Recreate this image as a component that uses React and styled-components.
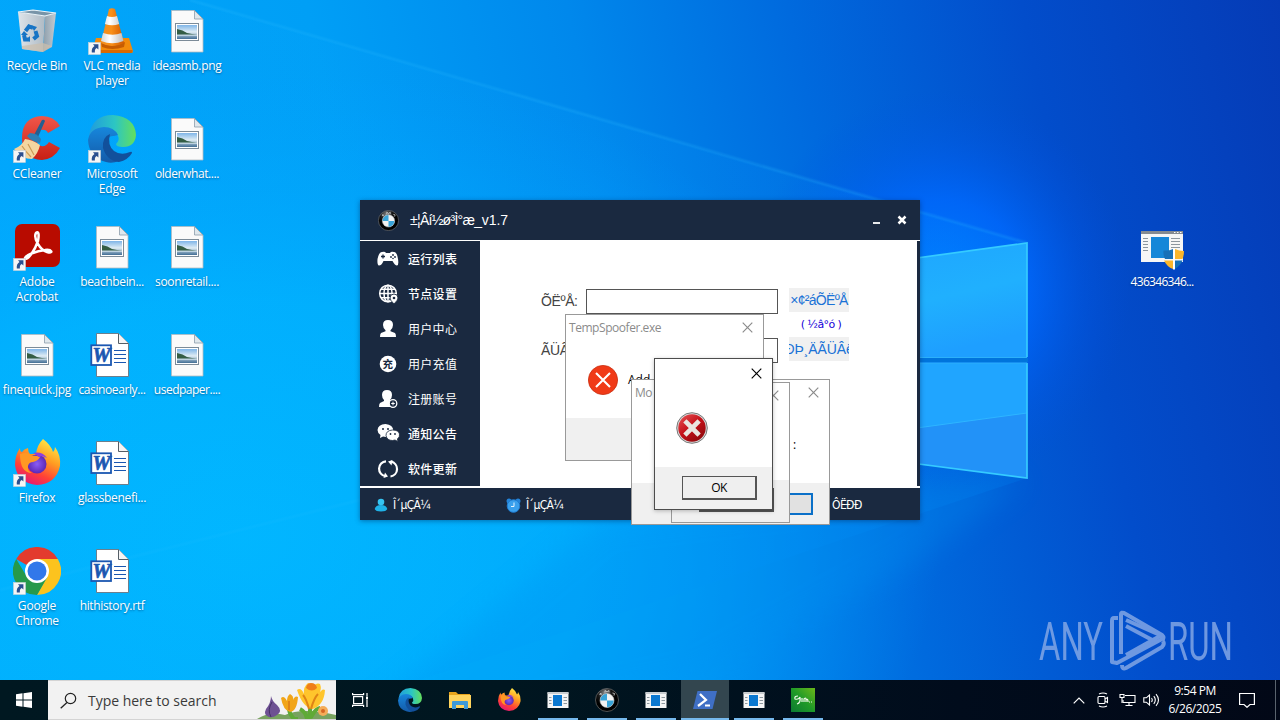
import React from "react";
import styled, { createGlobalStyle } from "styled-components";

const Global = createGlobalStyle`
  * { box-sizing: border-box; }
  html, body { margin: 0; padding: 0; }
  body { width: 1280px; height: 720px; overflow: hidden; }
  svg { display: block; flex: none; }
`;

const ui = `"Open Sans", "Noto Sans", "Noto Sans CJK SC", sans-serif`;
const navy = "#1a2940";

const Screen = styled.div`
  position: relative;
  width: 1280px;
  height: 720px;
  overflow: hidden;
  display: flex;
  flex-direction: column;
  font-family: ${ui};
  background: #0478e4;
`;
const Wallpaper = styled.div`
  position: absolute;
  inset: 0;
`;
const Desktop = styled.main`
  position: relative;
  flex: 1;
`;
const IconColumns = styled.div`
  display: grid;
  grid-template-columns: repeat(3, 75px);
  grid-auto-rows: 108px;
`;
const Shortcut = styled.div`
  display: flex;
  flex-direction: column;
  align-items: center;
  width: 74px;
  padding-top: 7px;
`;
const IconSlot = styled.div`
  position: relative;
  width: 48px;
  height: 48px;
`;
const Label = styled.div`
  margin-top: 3px;
  font-size: 12px;
  line-height: 15px;
  letter-spacing: ${(p) => p.$ls ?? -0.2}px;
  color: #fff;
  text-align: center;
  white-space: pre;
  text-shadow: 0 1px 2px rgba(0, 40, 90, 0.55);
`;
const ArrowBadge = styled.div`
  position: absolute;
  left: 0;
  bottom: 0;
`;
const Loose = styled.div`
  position: absolute;
  left: 1125px;
  top: 216px;
`;

/* ---------- application window ---------- */
const AppWindow = styled.section`
  position: absolute;
  left: 360px;
  top: 200px;
  width: 560px;
  height: 320px;
  display: flex;
  flex-direction: column;
  background: #fff;
  box-shadow: 0 1px 5px rgba(0, 30, 80, 0.45);
`;
const TitleBar = styled.header`
  display: flex;
  align-items: center;
  height: 40px;
  padding: 0 13px 0 18px;
  background: ${navy};
  color: #fff;
  margin-bottom: 1px;
`;
const AppTitle = styled.div`
  flex: 1;
  margin-left: 11px;
  margin-top: -1px;
  font: 14px/20px "Liberation Sans", sans-serif;
  letter-spacing: -0.72px;
`;
const VersionText = styled.span`
  letter-spacing: -0.1px;
`;
const Caption = styled.div`
  display: flex;
  align-items: center;
  gap: 15px;
`;
const AppBody = styled.div`
  display: flex;
  height: 245px;
  border-right: 3px solid ${navy};
  margin-bottom: 2px;
`;
const Sidebar = styled.nav`
  width: 120px;
  background: ${navy};
`;
const MenuItem = styled.div`
  display: flex;
  align-items: center;
  height: 35px;
  padding-left: 16px;
  gap: 8px;
  color: #fff;
  font: ${(p) => (p.$bold ? 500 : 400)} 12px/18px "Noto Sans CJK SC", sans-serif;
  letter-spacing: 0.3px;
`;
const Form = styled.div`
  flex: 1;
  display: grid;
  grid-template-columns: 45px 192px 60px;
  grid-template-rows: 25px 24px 25px;
  column-gap: 0;
  padding: 48px 0 0 61px;
`;
const FieldLabel = styled.label`
  font: 14px/24px "Liberation Sans", sans-serif;
  letter-spacing: -0.4px;
  color: #444;
  white-space: nowrap;
`;
const Field = styled.div`
  height: 25px;
  border: 1px solid #555;
  background: #fff;
`;
const LinkBox = styled.div`
  display: flex;
  justify-content: center;
  height: 24px;
  margin-left: 11px;
  width: 60px;
  margin-top: ${(p) => p.$up ?? 0}px;
  background: #f0f0f0;
  color: #1a72d6;
  font: 14px/25px "Liberation Sans", sans-serif;
  letter-spacing: ${(p) => p.$ls ?? 0}px;
  white-space: nowrap;
  overflow: hidden;
`;
const Unbind = styled.div`
  grid-column: 3;
  width: 60px;
  margin-left: 13px;
  color: #1400d8;
  font: 11px/21px "DejaVu Sans", sans-serif;
  text-align: center;
  letter-spacing: -0.6px;
  white-space: pre;
`;
const StatusBar = styled.footer`
  display: flex;
  align-items: center;
  height: 32px;
  padding: 2px 0 0 14px;
  background: ${navy};
  color: #fff;
  font: 12px/16px "DejaVu Sans Condensed", "DejaVu Sans", sans-serif;
  font-stretch: condensed;
`;
const Status = styled.div`
  display: flex;
  align-items: center;
  gap: 5px;
  width: ${(p) => p.$w}px;
  letter-spacing: -0.6px;
`;

/* ---------- message boxes ---------- */
const Dialog = styled.section`
  position: absolute;
  left: ${(p) => p.$x}px;
  top: ${(p) => p.$y}px;
  width: ${(p) => p.$w}px;
  height: ${(p) => p.$h}px;
  display: flex;
  flex-direction: column;
  background: #fff;
  border: 1px solid ${(p) => (p.$active ? "#4c4c4c" : "#999")};
  box-shadow: ${(p) => (p.$active ? "0 1px 4px rgba(0,0,0,.25)" : "none")};
  overflow: hidden;
`;
const DialogTitle = styled.div`
  display: flex;
  align-items: center;
  justify-content: space-between;
  height: ${(p) => p.$h ?? 24}px;
  padding: 0 10px 0 3px;
  font-size: 12px;
  letter-spacing: -0.45px;
  color: #8b8b8b;
`;
const DialogBody = styled.div`
  flex: 1;
  display: flex;
  align-items: center;
  gap: 10px;
  padding: ${(p) => p.$pad};
  font-size: 12px;
  color: #000;
`;
const DialogFooter = styled.div`
  display: flex;
  align-items: flex-start;
  justify-content: flex-end;
  height: ${(p) => p.$h}px;
  padding: ${(p) => p.$pad ?? "9px 15px 0 0"};
  background: #f0f0f0;
`;
const ClassicButton = styled.button`
  width: 75px;
  height: 24px;
  padding: 1px 0 0;
  border: 1px solid #555;
  border-right: 2px solid #555;
  border-bottom: 2px solid #555;
  background: #efefef;
  font: 12px/18px ${ui};
  letter-spacing: -0.7px;
  color: #000;
`;
const FlatButton = styled.button`
  width: 75px;
  height: 22px;
  border: 2px solid #0b70c8;
  background: #e1e1e1;
`;

/* ---------- taskbar ---------- */
const Taskbar = styled.footer`
  position: relative;
  display: flex;
  height: 40px;
  background: linear-gradient(90deg, #001821 0%, #001620 40%, #010c1c 75%, #020817 100%);
`;
const StartButton = styled.div`
  width: 48px;
  display: flex;
  align-items: center;
  justify-content: center;
`;
const Search = styled.div`
  width: 288px;
  display: flex;
  align-items: center;
  padding-left: 12px;
  background: #f2f2f2;
  border: 1px solid #d4d4d4;
  border-width: 1px 0 1px 0;
  color: #3a3a3a;
  font-size: 14px;
  letter-spacing: -0.02px;
`;
const SearchText = styled.span`
  flex: 1;
  margin-left: 11px;
  white-space: nowrap;
`;
const TaskItem = styled.div`
  display: flex;
  align-items: center;
  justify-content: center;
  width: ${(p) => p.$w ?? 48}px;
  margin-right: 1px;
  background: ${(p) => (p.$active ? "#33464f" : "transparent")};
  position: relative;
  &::after {
    content: "";
    position: absolute;
    bottom: 0;
    left: ${(p) => (p.$active ? 0 : 4)}px;
    right: ${(p) => (p.$active ? 0 : 4)}px;
    height: 2px;
    background: ${(p) => (p.$open ? "#76b9ed" : "transparent")};
  }
`;
const Tray = styled.div`
  margin-left: auto;
  display: flex;
  align-items: center;
`;
const TrayCell = styled.div`
  display: flex;
  justify-content: center;
  width: ${(p) => p.$w ?? 24}px;
`;
const NoticeCell = styled.div`
  width: 48px;
  padding-left: 12px;
`;
const Clock = styled.div`
  width: 64px;
  color: #fff;
  font-size: 12px;
  line-height: 18px;
  letter-spacing: -0.45px;
  text-align: center;
  white-space: nowrap;
`;
const ShowDesktop = styled.div`
  width: 5px;
  height: 40px;
  border-left: 1px solid #5a636d;
`;
const Watermark = styled.div`
  position: absolute;
  left: 1036px;
  top: 606px;
  opacity: 0.82;
`;

/* ---------- drawings ---------- */
const Backdrop = () => (
  <svg width="1280" height="720" viewBox="0 0 1280 720">
    <defs>
      <linearGradient id="base" x1="0" y1="0.12" x2="1" y2="0">
        <stop offset="0" stopColor="#00a6fb" />
        <stop offset="0.25" stopColor="#009ff6" />
        <stop offset="0.45" stopColor="#0088ec" />
        <stop offset="0.62" stopColor="#006ade" />
        <stop offset="0.8" stopColor="#024dcb" />
        <stop offset="1" stopColor="#053bb6" />
      </linearGradient>
      <radialGradient id="cyan" gradientUnits="userSpaceOnUse" cx="0" cy="0" r="1" gradientTransform="translate(240 540) scale(700 480)">
        <stop offset="0" stopColor="#00b8ff" />
        <stop offset="0.5" stopColor="#00b4ff" stopOpacity="0.8" />
        <stop offset="1" stopColor="#00a0ff" stopOpacity="0" />
      </radialGradient>
      <radialGradient id="halo" gradientUnits="userSpaceOnUse" cx="0" cy="0" r="1" gradientTransform="translate(940 290) scale(190 200)">
        <stop offset="0" stopColor="#0080ff" />
        <stop offset="0.45" stopColor="#0069ff" stopOpacity="0.8" />
        <stop offset="0.75" stopColor="#005cf0" stopOpacity="0.3" />
        <stop offset="1" stopColor="#0050e0" stopOpacity="0" />
      </radialGradient>
      <linearGradient id="beam" x1="0" y1="0" x2="1" y2="0.3">
        <stop offset="0" stopColor="#18b4ff" stopOpacity="0.15" />
        <stop offset="1" stopColor="#0090ff" stopOpacity="0.6" />
      </linearGradient>
      <linearGradient id="pane" x1="0" y1="0" x2="0.3" y2="1">
        <stop offset="0" stopColor="#1ea5ff" />
        <stop offset="0.55" stopColor="#20b0fe" />
        <stop offset="1" stopColor="#1e9fff" />
      </linearGradient>
      <filter id="soft"><feGaussianBlur stdDeviation="0.8" /></filter>
      <filter id="wide"><feGaussianBlur stdDeviation="14" /></filter>
    </defs>
    <rect width="1280" height="720" fill="url(#base)" />
    <rect width="1280" height="720" fill="url(#cyan)" />
    <ellipse cx="950" cy="290" rx="200" ry="220" fill="url(#halo)" />
    <path d="M190 0 L1027 243 L1027 478 L300 720 L0 720 L0 0Z" fill="url(#beam)" opacity="0.28" />
    <path d="M190 0 L1027 243" stroke="#30bfff" strokeWidth="1.6" opacity="0.38" filter="url(#soft)" />
    <path d="M920 485 L1027 478 L920 560 L700 680 L500 720 L360 720 L600 520Z" fill="#0090f0" opacity="0.3" filter="url(#wide)" />
    <path d="M0 590 L360 500" stroke="#35c5ff" strokeWidth="2" opacity="0.14" filter="url(#soft)" />
    <path d="M880 263 L1027 243 V357 H880Z" fill="url(#pane)" />
    <path d="M880 363 H1027 V478 L880 459Z" fill="#20a5ff" />
    <path d="M880 433 L1027 413 V478 L880 459Z" fill="#2292f8" />
    <path d="M880 433 L1027 413" stroke="#2eb5ff" strokeWidth="1" />
    <rect x="880" y="357.5" width="148" height="5" fill="#0074dc" />
    <path d="M880 263 L1027 243 V357 M1027 363 V478 L880 459" fill="none" stroke="#35cbff" strokeWidth="1.7" />
    <path d="M880 357.5 H1027 M880 363 H1027" stroke="#2cb0fa" strokeWidth="1" />
  </svg>
);

const Arrow = () => (
  <ArrowBadge>
    <svg width="13" height="13" viewBox="0 0 13 13">
      <rect x="0.5" y="0.5" width="12" height="12" fill="#f5f5f5" stroke="#c8d0d8" strokeWidth="0.6" />
      <path d="M5 2.3h5.4v5.2L8.7 6c-1.7 1-2 2.4-1.8 4.6H3.8C3.500 7.500 4.300 5.300 6.500 4Z" fill="#2b4f8f" />
    </svg>
  </ArrowBadge>
);

const RecycleBin = () => (
  <svg width="48" height="48" viewBox="0 0 48 48">
    <defs>
      <linearGradient id="binA"><stop stopColor="#dfe5ea" /><stop offset="1" stopColor="#aebac4" /></linearGradient>
      <linearGradient id="binB"><stop stopColor="#8d9eab" /><stop offset="1" stopColor="#c3cbd2" /></linearGradient>
    </defs>
    <path d="M5 5 32 9 30 45 9 42Z" fill="url(#binA)" />
    <path d="M32 9 43 6 39 40 30 45Z" fill="url(#binB)" />
    <path d="M9 39 30 36 39 39 30 45 9 42Z" fill="#cbbfae" opacity=".75" />
    <path d="M5 5 20 3 43 6 32 9Z" fill="#7894a8" stroke="#eef3f6" strokeWidth="1.200" />
    <g fill="none" stroke="#1674c5" strokeWidth="4">
      <path d="M12.500 24 16 19.500 20 21" /><path d="M22.500 24 24 29 20.500 32" /><path d="M16.500 32.500H12L11 28" />
    </g>
    <g fill="#1674c5"><path d="M18 18l6 2-3 4z" /><path d="M17 29v6l-3-3z" /><path d="M8 28l3-4 4 4z" /></g>
  </svg>
);
const Vlc = () => (
  <svg width="48" height="48" viewBox="0 0 48 48">
    <defs>
      <linearGradient id="cone"><stop stopColor="#f29020" /><stop offset=".45" stopColor="#f98f18" /><stop offset="1" stopColor="#d05800" /></linearGradient>
      <linearGradient id="coneW"><stop stopColor="#d5d5d5" /><stop offset=".4" stopColor="#fff" /><stop offset="1" stopColor="#bcbcbc" /></linearGradient>
    </defs>
    <path d="M8 31h33l4 13q0 2-2 2H5q-2 0-1-2Z" fill="#f28b0c" /><path d="M3.500 43h41v2q0 1-1.500 1H5q-1.500 0-1.500-1.500Z" fill="#d96900" />
    <path d="M13 35Q24 42 37 35l-1 5q-12 4-22 0Z" fill="#c65c02" />
    <path d="M21 2q3-1.500 6 0l9 34q-12 6-23 0Z" fill="url(#cone)" />
    <path d="M19 9q5 2 10 0l2.200 8q-7 2.500-14.300 0ZM15 26q10 3.500 18.500 0l2 8q-11 4.500-22.500 0Z" fill="url(#coneW)" />
  </svg>
);
const CCleaner = () => (
  <svg width="48" height="48" viewBox="0 0 48 48">
    <defs><linearGradient id="cc" x2="0" y2="1"><stop stopColor="#f0574a" /><stop offset="1" stopColor="#c81f14" /></linearGradient></defs>
    <path d="M47 11Q41 1 29 1 9 2 9 23t20 22q12-1 18-12l-11-6q-3 5-8 4-5-2-5-8t5-8q5-1 7 3Z" fill="url(#cc)" />
    <path d="M29 5q2-1 3 1L25 22l-4-2Z" fill="#235f91" /><path d="M17 18q7 0 11 6l-1 4q-8-1-13-7Z" fill="#2c7fb5" />
    <path d="M12 24q8 1 15 6-2 9-8 14-10 0-18-10 8-3 11-10Z" fill="#f4d6a0" /><path d="M9 31q4 6 9 11M15 29l6 11" stroke="#cc9a55" strokeWidth="1.200" fill="none" />
  </svg>
);
const Edge = ({ s = 48 }) => (
  <svg width={s} height={s} viewBox="0 0 48 48">
    <defs>
      <linearGradient id="e1" x1="0" x2="1"><stop stopColor="#209bdd" /><stop offset=".55" stopColor="#2cc6c3" /><stop offset="1" stopColor="#64df5c" /></linearGradient>
      <linearGradient id="e2" x2="0" y2="1"><stop stopColor="#1787dc" /><stop offset="1" stopColor="#145aa8" /></linearGradient>
    </defs>
    <path d="M1 21Q4 0 25 0q22 2 23 20-1 12-13 12-7 0-7-3 4-4 2-8-2-6-9-6Q9 14 1 21Z" fill="url(#e1)" />
    <path d="M0 25Q2 13 16 12q10 0 14 8l-4 1q-7-1-7 8 1 10 12 17-7 3-13 1Q1 43 0 25Z" fill="url(#e2)" />
    <path d="M22 19q-8 3-7 14 4 13 16 14 9-2 13-9 0-2-2-1-9 4-16-1-7-6-4-17Z" fill="#12509b" />
  </svg>
);
const Acrobat = () => (
  <svg width="48" height="48" viewBox="0 0 48 48">
    <rect x="2" y="1" width="45" height="43" rx="7" fill="#b80b00" />
    <path d="M23 10c-3 5 4 17 11 19 7 2 5-3-2-2-9 1-19 5-20 8 2 4 10-8 13-17 1-5 1-11-2-8Z" fill="none" stroke="#fff" strokeWidth="2.500" strokeLinejoin="round" />
  </svg>
);
const ImageFile = () => (
  <svg width="48" height="48" viewBox="0 0 48 48">
    <defs><linearGradient id="sky" x2="0" y2="1"><stop stopColor="#7fb5e8" /><stop offset=".5" stopColor="#e0edf4" /><stop offset="1" stopColor="#416d94" /></linearGradient></defs>
    <path d="M8.500 3.500h23l8.500 8.500v33H8.500Z" fill="#fafafa" stroke="#b2bac0" strokeWidth=".8" />
    <path d="M31.500 3.500V12H40Z" fill="#dfe7ec" stroke="#8c9dab" strokeWidth=".8" />
    <rect x="12.500" y="16.500" width="23" height="17" fill="#fff" stroke="#7c8b98" />
    <rect x="14" y="18" width="20" height="14" fill="url(#sky)" /><path d="M14 22q6 1 10 4l10 2H14Z" fill="#345d44" /><path d="M14 27.500h20V29H14Z" fill="#bdd2df" />
  </svg>
);
const WordMark = styled.text`
  font: italic 900 20px "Liberation Serif", serif;
  fill: #1b57b1;
  stroke: #1b57b1;
  stroke-width: 0.7px;
`;
const WordFile = () => (
  <svg width="48" height="48" viewBox="0 0 48 48">
    <path d="M8.500 2.500h22l10 10v33h-32Z" fill="#fff" stroke="#6a7580" strokeWidth=".9" />
    <path d="M30.500 2.500v10h10" fill="#f5f5f5" stroke="#555e66" />
    <path d="M26 19.500h12M26 23.500h12M26 27.500h12M26 31.500h12" stroke="#1b57b1" />
    <rect x="3.300" y="14.300" width="19.700" height="19.700" fill="#fff" stroke="#1b57b1" strokeWidth="1.800" />
    <WordMark x="4.500" y="30.500" textLength="18" lengthAdjust="spacingAndGlyphs">W</WordMark>
  </svg>
);
const Firefox = ({ s = 48 }) => (
  <svg width={s} height={s} viewBox="0 0 48 48">
    <defs>
      <linearGradient id="ff" x1=".8" y1="0" x2=".3" y2="1"><stop stopColor="#fff14a" /><stop offset=".4" stopColor="#ff9d22" /><stop offset=".72" stopColor="#ff4136" /><stop offset="1" stopColor="#e31578" /></linearGradient>
      <radialGradient id="fp"><stop stopColor="#8b5cf6" /><stop offset="1" stopColor="#5b28b5" /></radialGradient>
    </defs>
    <path d="M30 0q8 6 10 13 2-2 2-5 6 8 5 19-4 18-23 19Q4 44 2 26 2 16 7 9q0 4 2 4 2-3 6-4 0 4 2 6h6Q24 6 30 0Z" fill="url(#ff)" />
    <circle cx="24" cy="25" r="9.500" fill="url(#fp)" />
    <path d="M7 15q8-3 12 2 4-1 8 1-2 4-7 5-4 0-5 4-1 5 4 7Q7 34 7 15Z" fill="#ff9823" /><path d="M20 14q9-2 14 5-5-3-8-1Z" fill="#8d3fe0" />
  </svg>
);
const Chrome = () => (
  <svg width="48" height="48" viewBox="0 0 48 48">
    <path d="M24 24 3.200 12A24 24 0 0 1 44.800 12Z" fill="#e33b2e" />
    <path d="M24 24V12h20.800A24 24 0 0 1 24 48l10-18Z" fill="#fcc31e" />
    <path d="M34.400 30 24 48A24 24 0 0 1 3.200 12L14 30l10 6Z" fill="#26994a" />
    <circle cx="24" cy="24" r="12" fill="#fff" /><circle cx="24" cy="24" r="9.500" fill="#3178ea" />
  </svg>
);
const ExeFile = () => (
  <svg width="48" height="48" viewBox="0 0 48 48">
    <rect x="3" y="8" width="42" height="31" fill="#f6f6f6" /><rect x="3" y="8" width="42" height="3" fill="#858b91" />
    <path d="M36 9.500h1.500M39 9.500h1.500M42 9.500h1.500" stroke="#fff" />
    <rect x="13" y="14" width="18" height="21" fill="#1687d8" />
    <path d="M5 15.500h5M5 18.500h5M5 21.500h5M5 24.500h5M5 27.500h5M33 15.500h9M33 18.500h9M33 21.500h9M33 24.500h9" stroke="#8c969e" />
    <path d="M35 26v10h-8q-2-4-1.500-8.500Q31 28 35 26Z" fill="#1770b8" /><path d="M37 26q4 2 9 2 0 4-1.500 8H37Z" fill="#fbb62b" /><path d="M26 37.500h9v8.500q-6-2-9-8.500Z" fill="#fbb62b" /><path d="M37 37.500h7.500q-2 5-7.500 8.500Z" fill="#1770b8" />
    <path d="M35 25.500h2v21h-2Z" fill="#fff" />
  </svg>
);
const Bmw = ({ s = 20 }) => (
  <svg width={s} height={s} viewBox="0 0 24 24">
    <defs><radialGradient id="bm" cx=".4" cy=".2"><stop stopColor="#8b8b8b" /><stop offset=".6" stopColor="#161616" /><stop offset="1" stopColor="#000" /></radialGradient></defs>
    <circle cx="12" cy="12" r="11.500" fill="url(#bm)" stroke="#858585" strokeWidth="0.600" />
    <path d="M4.500 6.500l2-1M5 5l1.500 2M10 4.500V2.500l2 1.500 2-1.500v2M17.500 5l2 .5-.5 2" stroke="#ddd" strokeWidth=".8" fill="none" />
    <circle cx="12" cy="12.500" r="7" fill="#f2f2f2" /><path d="M12 12.500V5.500a7 7 0 0 0-7 7ZM12 12.500v7a7 7 0 0 0 7-7Z" fill="#39a4d8" />
    <circle cx="12" cy="12.500" r="7" fill="none" stroke="#bbb" strokeWidth=".6" />
  </svg>
);

const CloseX = ({ color = "#8a8a8a" }) => (
  <svg width="11" height="11" viewBox="0 0 11 11"><path d="M.7.7l9.600 9.600M10.300.7.7 10.300" stroke={color} strokeWidth="1.150" /></svg>
);

const MenuGlyph = ({ kind }) => {
  const art = {
    pad: <><path d="M6 5q3-1 4 1h4q1-2 4-1 3 0 4 7 1 6-1 6.500-2 0-4.500-4.500h-9q-2 4.500-4.500 4.500Q1 18 1.500 12 3 5 6 5Z" fill="#fff" /><path d="M5 9.500h4M7 7.500v4" stroke={navy} strokeWidth="1.300" /><circle cx="17" cy="8" r=".9" fill={navy} /><circle cx="19" cy="10" r=".9" fill={navy} /><circle cx="15" cy="10" r=".9" fill={navy} /><circle cx="17" cy="11.500" r=".8" fill={navy} /></>,
    globe: <><g fill="none" stroke="#fff" strokeWidth="1.500"><circle cx="12" cy="11.500" r="8.300" /><ellipse cx="12" cy="11.500" rx="4" ry="8.300" /><path d="M3.700 11.500h16.600M12 3v17M5 7.300h14M5 15.700h14" /></g><path d="M18 12a4 4 0 0 1 4 4q0 2-4 6-4-4-4-6a4 4 0 0 1 4-4Z" fill="#fff" stroke={navy} strokeWidth=".9" /><circle cx="18" cy="16" r="1.300" fill={navy} /></>,
    user: <path d="M12 3q5 0 5 5 0 3-2.500 5.200v1L19 16q1 1 1 4H4q0-3 1-4l4.500-1.800v-1Q7 11 7 8q0-5 5-5Z" fill="#fff" />,
    coin: <circle cx="12" cy="12" r="8.300" fill="#fff" />,
    add: <><path d="M11 3q5 0 5 5 0 3-2 5v1l3 2v4H3q0-3 1-4l4-2v-1Q6 11 6 8q0-5 5-5Z" fill="#fff" /><circle cx="17" cy="16.500" r="3.800" fill={navy} stroke="#fff" strokeWidth="1.300" /><path d="M17 14.700v3.600M15.200 16.500h3.600" stroke="#fff" /></>,
    chat: <><path d="M9.500 2Q2 2.500 1.500 8q0 3 3 5L4 16l3-1.500 3 .5q7-1 7.500-6Q17 2.500 9.500 2Z" fill="#fff" /><path d="M16.500 8Q10 8.500 10 13.500q1 5 6.500 5l2.500-.5 3 1.500-.6-2.500Q24 15 23.500 12q-1-4-7-4Z" fill="#fff" stroke={navy} strokeWidth=".8" /><g fill={navy}><circle cx="7" cy="7" r="1" /><circle cx="12" cy="7" r="1" /><circle cx="14.500" cy="12" r=".9" /><circle cx="19" cy="12" r=".9" /></g></>,
    sync: <g fill="none" stroke="#fff" strokeWidth="2.200"><path d="M9.500 19.200A7.500 7.500 0 0 1 10 4.300M15 4.700A7.500 7.500 0 0 1 14.500 19.500" /><path d="M7.500 21 12 19.500 9 15.500ZM16.500 3 12 4.500l3.500 4Z" fill="#fff" stroke="none" /></g>,
  };
  return (
    <svg width="24" height="24" viewBox="0 0 24 24">
      {art[kind]}
      {kind === "coin" && <CoinText x="12" y="15.800">充</CoinText>}
    </svg>
  );
};
const CoinText = styled.text`
  font: 700 10.5px "Noto Sans CJK SC", sans-serif;
  text-anchor: middle;
  fill: ${navy};
`;

const FlatError = () => (
  <svg width="30" height="30" viewBox="0 0 30 30"><circle cx="15" cy="15" r="14.600" fill="#f03a17" stroke="#c92e10" strokeWidth=".8" /><path d="M8 8l14 14M22 8 8 22" stroke="#fff" strokeWidth="2.100" /></svg>
);
const GlossError = () => (
  <svg width="32" height="32" viewBox="0 0 32 32">
    <defs><linearGradient id="ge" x2=".8" y2="1"><stop stopColor="#e85558" /><stop offset=".5" stopColor="#c5121a" /><stop offset="1" stopColor="#8e080c" /></linearGradient></defs>
    <circle cx="16" cy="16" r="15.300" fill="#d9d9d9" stroke="#777" strokeWidth="1" /><circle cx="16" cy="16" r="13.700" fill="url(#ge)" />
    <path d="M10.500 10.500l11 11M21.500 10.500l-11 11" stroke="#eae6e0" strokeWidth="4.600" strokeLinecap="square" />
  </svg>
);

const WindowGlyph = () => (
  <svg width="22" height="18" viewBox="0 0 22 18"><rect x=".5" y="1.500" width="21" height="15.500" fill="#f5f5f5" /><rect x=".5" y="1" width="21" height="2" fill="#c9cdd0" /><rect x="6" y="4" width="9" height="11" fill="#0b78d0" /><path d="M2 6.500h2.500M2 9.500h2.500M2 12.500h2.500M16.500 6.500H20M16.500 9.500H20M16.500 12.500H20" stroke="#8e989f" /></svg>
);
const Folder = () => (
  <svg width="22" height="20" viewBox="0 0 22 20"><path d="M0 2h7l2 2h12v14H0Z" fill="#e8a51d" /><path d="M0 5h22v13H0Z" fill="#ffd45d" /><path d="M3 19v-7q0-1 1-1h14q1 0 1 1v7h-4v-4H7v4Z" fill="#3d9ad8" /></svg>
);
const PowerShell = () => (
  <svg width="24" height="20" viewBox="0 0 24 20"><path d="M4.500 1H24l-4.500 18H0Z" fill="#3f6fc5" /><path d="M7 4l6 6-8 6" fill="none" stroke="#fff" strokeWidth="2.200" /><path d="M12 15.500h5" stroke="#fff" strokeWidth="2" /></svg>
);
const GreenApp = () => (
  <svg width="24" height="24" viewBox="0 0 24 24">
    <defs><linearGradient id="gr" x1="0" y1="1" x2="1" y2="0"><stop stopColor="#0c7a31" /><stop offset=".5" stopColor="#1f9a28" /><stop offset="1" stopColor="#6cb819" /></linearGradient></defs>
    <rect width="24" height="24" fill="url(#gr)" /><path d="M7 8q-4 0-3 3 4 1 5-2 1 6-3 7M11 10v4M13 14v-3q2-2 2 0v3M15 12q2-2 2 2" fill="none" stroke="#eff8e9" strokeWidth="1.200" /><path d="M18 14h1M20 14h1" stroke="#eff8e9" />
  </svg>
);
const TaskView = () => (
  <svg width="17" height="16" viewBox="0 0 17 16"><g fill="none" stroke="#fff" strokeWidth="1.200"><rect x="1.600" y="4.600" width="9" height="7" /><path d="M.6 1v1.600h11V1M.6 15v-1.600h11V15M15 1v3M15 8v7" /></g><rect x="14" y="4.500" width="2" height="3" fill="#fff" /></svg>
);
const Crocus = () => (
  <svg width="79" height="38" viewBox="0 0 79 38">
    <path d="M0 38q12-8 28-4 17-8 51 0v4Z" fill="#78a35f" />
    <path d="M32 24q-1 8 5 14h4M55 23q-4 8-1 15M54 36q5-9 9-9M50 38q-1-7-7-10" stroke="#5faa37" strokeWidth="4" fill="none" />
    <path d="M14 15q1 5 6 9 6 6 0 10-4 3-8 2-6-2-3-8Q14 22 14 15Z" fill="#6e5193" /><path d="M15 21q-5 8-1 15" stroke="#443065" fill="none" />
    <path d="M24 17q3-3 6 3 0-5 3-7 4 2 3 6 2-5 5-3-1 14-8 15-7-2-9-14Z" fill="#f1a518" />
    <path d="M40 9q4-3 7 4-1-7 4-11 2 0 4 4 5-5 8-3 2 5-1 10 3-6 6-4-1 15-12 19-10-1-16-19Z" fill="#ffc52c" /><path d="M46 14q3 3 6 14M61 13q-4 4-7 15M32 20v9" stroke="#df8416" strokeWidth="2" fill="none" />
    <path d="M49 7q1-5 5-5 5 0 6 5-5 5-11 0Z" fill="#ef7d19" />
    <circle cx="66" cy="30" r="5" fill="#f4ac58" /><circle cx="66" cy="30" r="2" fill="#d66722" />
  </svg>
);
const MarkText = styled.text`
  font: 400 54px Roboto, sans-serif;
  fill: #86a9e6;
`;
const BrandMark = () => (
  <svg width="204" height="72" viewBox="0 0 204 72">
    <MarkText x="3" y="53.500" textLength="64" lengthAdjust="spacingAndGlyphs">ANY</MarkText>
    <g fill="none" stroke="#86a9e6" strokeWidth="4" strokeLinejoin="round">
      <path d="M82 12h-4q-2 0-2 3v41l5 1 44-23.500q2-2 0-4L90 14" />
      <path d="M85 48V8q0-2 3-1l38 22q3 3 0 5M90 20l30 16" />
      <path d="M86 59q0 5 4 3l36-21q3-3 1-6M124 30l-34 19" />
    </g>
    <MarkText x="132" y="53.500" textLength="65" lengthAdjust="spacingAndGlyphs">RUN</MarkText>
  </svg>
);

/* ---------- data ---------- */
const shortcuts = [
  ["Recycle Bin", RecycleBin, 0, -0.2], ["VLC media\nplayer", Vlc, 1, -0.2], ["ideasmb.png", ImageFile, 0, -0.3],
  ["CCleaner", CCleaner, 1, -0.2], ["Microsoft\nEdge", Edge, 1, -0.2], ["olderwhat....", ImageFile, 0, -0.4],
  ["Adobe\nAcrobat", Acrobat, 1, -0.2], ["beachbein...", ImageFile, 0, -0.35], ["soonretail....", ImageFile, 0, -0.35],
  ["finequick.jpg", ImageFile, 0, -0.2], ["casinoearly...", WordFile, 0, -0.4], ["usedpaper....", ImageFile, 0, -0.5],
  ["Firefox", Firefox, 1, -0.3], ["glassbenefi...", WordFile, 0, -0.3], null,
  ["Google\nChrome", Chrome, 1, -0.2], ["hithistory.rtf", WordFile, 0, -0.35],
];
const menu = [
  ["pad", "运行列表", 1], ["globe", "节点设置", 1], ["user", "用户中心"], ["coin", "用户充值"],
  ["add", "注册账号"], ["chat", "通知公告", 1], ["sync", "软件更新", 1],
];

export default function App() {
  return (
    <Screen>
      <Global />
      <Wallpaper><Backdrop /></Wallpaper>
      <Desktop>
        <IconColumns>
          {shortcuts.map((s, i) => {
            if (!s) return <div key={i} />;
            const [name, Art, linked, spacing] = s;
            return (
              <Shortcut key={i}>
                <IconSlot><Art />{linked ? <Arrow /> : null}</IconSlot>
                <Label $ls={spacing}>{name}</Label>
              </Shortcut>
            );
          })}
        </IconColumns>
        <Loose>
          <Shortcut>
            <IconSlot><ExeFile /></IconSlot>
            <Label $ls={-0.7}>436346346...</Label>
          </Shortcut>
        </Loose>

        <AppWindow>
          <TitleBar>
            <Bmw s={21} />
            <AppTitle>±¦Âí½ø³Ì°æ<VersionText>_v1.7</VersionText></AppTitle>
            <Caption>
              <svg width="9" height="9" viewBox="0 0 9 9"><path d="M0 7h7" stroke="#fff" strokeWidth="1.800" /></svg>
              <svg width="10" height="10" viewBox="0 0 10 10"><path d="M1.500 1.500l7 7M8.500 1.500l-7 7" stroke="#fff" strokeWidth="2.500" /></svg>
            </Caption>
          </TitleBar>
          <AppBody>
            <Sidebar>
              {menu.map(([kind, text, bold]) => (
                <MenuItem key={kind} $bold={bold}><MenuGlyph kind={kind} />{text}</MenuItem>
              ))}
            </Sidebar>
            <Form>
              <FieldLabel>ÕËºÅ:</FieldLabel><Field /><LinkBox $up={-1} $ls={-0.7}>×¢²áÕËºÅ</LinkBox>
              <Unbind>( ½â°ó )</Unbind>
              <FieldLabel>ÃÜÂë:</FieldLabel><Field /><LinkBox $up={-1} $ls={-0.1}>ÐÞ¸ÄÃÜÂë</LinkBox>
            </Form>
          </AppBody>
          <StatusBar>
            <Status $w={132}>
              <svg width="14" height="14" viewBox="0 0 14 14"><circle cx="7" cy="4" r="3.300" fill="#35c4f2" /><path d="M.7 11q1-4 6.300-4t6.300 4q-1 2.500-6.300 2.500T.7 11Z" fill="#1fb2e8" /></svg>
              Î´µÇÂ¼
            </Status>
            <Status $w={326}>
              <svg width="15" height="15" viewBox="0 0 15 15"><circle cx="3" cy="3" r="2.500" fill="#2384da" /><circle cx="12" cy="3" r="2.500" fill="#2384da" /><circle cx="7.500" cy="8" r="6.300" fill="#3aa0ed" stroke="#1f7bd0" /><path d="M8 4.500v4H5" stroke="#e4f4ff" fill="none" /></svg>
              Î´µÇÂ¼
            </Status>
            <Status $w={60}>ÔËÐÐ</Status>
          </StatusBar>
        </AppWindow>

        <Dialog $x={565} $y={314} $w={199} $h={147}>
          <DialogTitle>TempSpoofer.exe<CloseX /></DialogTitle>
          <DialogBody $pad="2px 0 0 22px"><FlatError />Add</DialogBody>
          <DialogFooter $h={42} />
        </Dialog>
        <Dialog $x={631} $y={379} $w={199} $h={146}>
          <DialogTitle>Mo<CloseX /></DialogTitle>
          <DialogBody $pad="1px 0 0 161px">:</DialogBody>
          <DialogFooter $h={41} $pad="10px 16px 0 0"><FlatButton /></DialogFooter>
        </Dialog>
        <Dialog $x={671} $y={382} $w={119} $h={141}>
          <DialogTitle $h={25}><span /><CloseX /></DialogTitle>
          <DialogBody $pad="0" />
          <DialogFooter $h={42} $pad="8px 15px 0 0"><ClassicButton /></DialogFooter>
        </Dialog>
        <Dialog $x={654} $y={358} $w={119} $h={152} $active>
          <DialogTitle $h={28}><span /><CloseX color="#000" /></DialogTitle>
          <DialogBody $pad="2px 0 0 21px"><GlossError /></DialogBody>
          <DialogFooter $h={42}><ClassicButton>OK</ClassicButton></DialogFooter>
        </Dialog>

        <Watermark><BrandMark /></Watermark>
      </Desktop>

      <Taskbar>
        <StartButton>
          <svg width="16" height="16" viewBox="0 0 16 16"><path d="M0 2.200 6.500 1.300V7.500H0ZM7.500 1.200 16 0v7.500H7.500ZM0 8.500h6.500v6.200L0 13.800ZM7.500 8.500H16V16l-8.500-1.200Z" fill="#fff" /></svg>
        </StartButton>
        <Search>
          <svg width="17" height="17" viewBox="0 0 17 17"><circle cx="10.500" cy="6.500" r="5.200" fill="none" stroke="#222" strokeWidth="1.200" /><path d="M7 10.500.7 16.300" stroke="#222" strokeWidth="1.300" /></svg>
          <SearchText>Type here to search</SearchText>
          <Crocus />
        </Search>
        <TaskItem><TaskView /></TaskItem>
        <TaskItem $w={50}><Edge s={24} /></TaskItem>
        <TaskItem><Folder /></TaskItem>
        <TaskItem><Firefox s={24} /></TaskItem>
        <TaskItem $open><WindowGlyph /></TaskItem>
        <TaskItem $open><Bmw s={24} /></TaskItem>
        <TaskItem $open><WindowGlyph /></TaskItem>
        <TaskItem $open $active><PowerShell /></TaskItem>
        <TaskItem $open><WindowGlyph /></TaskItem>
        <TaskItem $open><GreenApp /></TaskItem>
        <Tray>
          <TrayCell><svg width="12" height="7" viewBox="0 0 12 7"><path d="M.7 6.300 6 1l5.300 5.300" fill="none" stroke="#fff" strokeWidth="1.200" /></svg></TrayCell>
          <TrayCell><svg width="12" height="16" viewBox="0 0 12 16"><g fill="none" stroke="#fff" strokeWidth="1.100"><rect x="1" y="4.500" width="7" height="7" rx="1" /><path d="M8 7l2.500-1.500v5L8 9M2 2q4-2 8 0M2 14q4 2 8 0" /></g></svg></TrayCell>
          <TrayCell><svg width="17" height="14" viewBox="0 0 17 14"><g fill="none" stroke="#fff" strokeWidth="1.100"><path d="M6 2.500h10v7H4V7M10 9.500v3M6.500 12.500h7" /><path d="M1 1.500h4v3H1ZM3 4.500V10" /></g></svg></TrayCell>
          <TrayCell><svg width="17" height="14" viewBox="0 0 17 14"><g fill="none" stroke="#fff" strokeWidth="1.100"><path d="M.8 4.800h2.500L6.500 2v10L3.300 9.200H.8ZM8.500 5q1.500 2 0 4M10.800 3.200q3 3.800 0 7.600M13 1.200q5 5.800 0 11.600" /></g></svg></TrayCell>
          <Clock>9:54 PM<br />6/26/2025</Clock>
          <NoticeCell><svg width="16" height="16" viewBox="0 0 16 16"><path d="M.6 1.500h14.800v11H11L8 15.300 5 12.500H.6Z" fill="none" stroke="#fff" strokeWidth="1.200" /></svg></NoticeCell>
          <ShowDesktop />
        </Tray>
      </Taskbar>
    </Screen>
  );
}
